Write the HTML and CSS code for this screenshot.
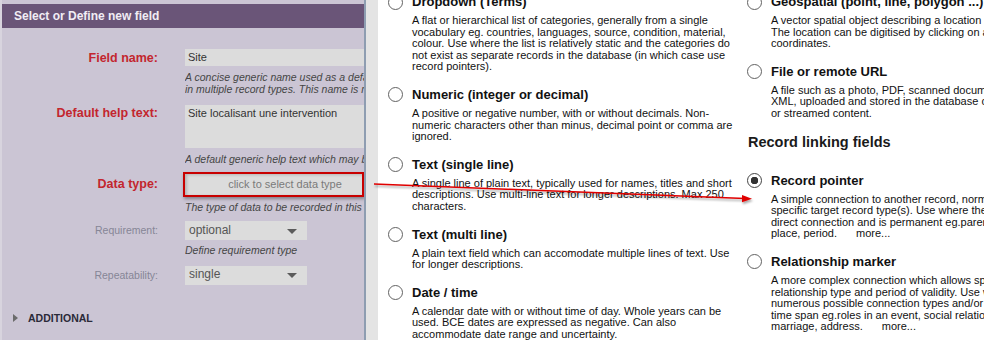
FILE: index.html
```html
<!DOCTYPE html>
<html lang="en">
<head>
  <meta charset="UTF-8">
  <meta name="viewport" content="width=device-width, initial-scale=1.0">
  <title>Select or Define new field</title>
  <link rel="stylesheet" href="styles.css">
</head>
<body>
  <div class="page">
    <div class="field-panel">
      <div class="panel-header">Select or Define new field</div>
      <div class="panel-body">
        <div class="row row-name">
          <div class="label">Field name:</div>
          <div class="control">
            <div class="input">Site</div>
            <div class="help">A concise generic name used as a default<br>in multiple record types. This name is rarely</div>
          </div>
        </div>
        <div class="row row-help">
          <div class="label">Default help text:</div>
          <div class="control">
            <div class="input textarea">Site localisant une intervention</div>
            <div class="help">A default generic help text which may be</div>
          </div>
        </div>
        <div class="row row-type">
          <div class="label label-type">Data type:</div>
          <div class="control">
            <div class="dt-box">
              <div class="dt-btn">click to select data type</div>
            </div>
            <div class="help">The type of data to be recorded in this field</div>
          </div>
        </div>
        <div class="row row-req">
          <div class="label plain">Requirement:</div>
          <div class="control">
            <div class="select"><span>optional</span><span class="caret"></span></div>
            <div class="help help-tight">Define requirement type</div>
          </div>
        </div>
        <div class="row row-rep">
          <div class="label plain">Repeatability:</div>
          <div class="control">
            <div class="select"><span>single</span><span class="caret"></span></div>
          </div>
        </div>
        <div class="additional"><span class="tri"></span>ADDITIONAL</div>
      </div>
    </div>

    <div class="gutter"></div>

    <div class="type-col">
      <div class="opt">
        <span class="radio"></span>
        <div>
          <div class="opt-title">Dropdown (Terms)</div>
          <div class="opt-desc">A flat or hierarchical list of categories, generally from a single vocabulary eg. countries, languages, source, condition, material, colour. Use where the list is relatively static and the categories do not exist as separate records in the database (in which case use record pointers).</div>
        </div>
      </div>
      <div class="opt">
        <span class="radio"></span>
        <div>
          <div class="opt-title">Numeric (integer or decimal)</div>
          <div class="opt-desc">A positive or negative number, with or without decimals. Non-numeric characters other than minus, decimal point or comma are ignored.</div>
        </div>
      </div>
      <div class="opt">
        <span class="radio"></span>
        <div>
          <div class="opt-title">Text (single line)</div>
          <div class="opt-desc">A single line of plain text, typically used for names, titles and short descriptions. Use multi-line text for longer descriptions. Max 250 characters.</div>
        </div>
      </div>
      <div class="opt">
        <span class="radio"></span>
        <div>
          <div class="opt-title">Text (multi line)</div>
          <div class="opt-desc">A plain text field which can accomodate multiple lines of text. Use for longer descriptions.</div>
        </div>
      </div>
      <div class="opt">
        <span class="radio"></span>
        <div>
          <div class="opt-title">Date / time</div>
          <div class="opt-desc">A calendar date with or without time of day. Whole years can be used. BCE dates are expressed as negative. Can also accommodate date range and uncertainty.</div>
        </div>
      </div>
    </div>

    <div class="type-col type-col-right">
      <div class="opt">
        <span class="radio"></span>
        <div>
          <div class="opt-title">Geospatial (point, line, polygon ...)</div>
          <div class="opt-desc nowrap">A vector spatial object describing a location or region.<br>The location can be digitised by clicking on a map, or entered as<br>coordinates.</div>
        </div>
      </div>
      <div class="opt">
        <span class="radio"></span>
        <div>
          <div class="opt-title">File or remote URL</div>
          <div class="opt-desc nowrap">A file such as a photo, PDF, scanned document, text file or<br>XML, uploaded and stored in the database or a URL to remote files<br>or streamed content.</div>
        </div>
      </div>
      <div class="group-title">Record linking fields</div>
      <div class="opt">
        <span class="radio checked"></span>
        <div>
          <div class="opt-title">Record pointer</div>
          <div class="opt-desc nowrap">A simple connection to another record, normally of one or more<br>specific target record type(s). Use where the linked entity is a<br>direct connection and is permanent eg.parent organisation, birth<br>place, period.<span class="more">more...</span></div>
        </div>
      </div>
      <div class="opt">
        <span class="radio"></span>
        <div>
          <div class="opt-title">Relationship marker</div>
          <div class="opt-desc nowrap">A more complex connection which allows specification of the<br>relationship type and period of validity. Use where there are<br>numerous possible connection types and/or a limited<br>time span eg.roles in an event, social relationships,<br>marriage, address.<span class="more">more...</span></div>
        </div>
      </div>
    </div>

    <!-- annotation arrow from the data type button to the chosen type -->
    <svg class="arrow" width="984" height="340" viewBox="0 0 984 340">
      <defs>
        <filter id="shadow" x="-5%" y="-50%" width="110%" height="200%">
          <feDropShadow dx="1" dy="2" stdDeviation="1" flood-color="#000" flood-opacity="0.35"/>
        </filter>
      </defs>
      <g filter="url(#shadow)">
        <line x1="374" y1="184" x2="745" y2="198.4" stroke="#e00000" stroke-width="1.5"/>
        <polygon points="742,195 752,198.7 742,202.2" fill="#e00000"/>
      </g>
    </svg>
  </div>
</body>
</html>
```

FILE: styles.css
```css
* {
  box-sizing: border-box;
}

body {
  margin: 0;
  font-family: "Liberation Sans", Arial, sans-serif;
  color: #111;
  background: #fff;
  overflow: hidden;
}

.page {
  position: relative;
  display: flex;
  width: 984px;
  height: 340px;
  overflow: hidden;
}

/* left edit panel */
.field-panel {
  flex: 0 0 366px;
  background: #cbc5d4;
  border-left: 2px solid #d8d4de;
  border-right: 2px solid #8e9db1;
  padding-top: 4px;
  overflow: hidden;
}

.panel-header {
  height: 24px;
  line-height: 24px;
  padding-left: 12px;
  background: #6a5578;
  color: #f1edf4;
  font-size: 12px;
  font-weight: bold;
}

.panel-body {
  padding-top: 21px;
}

.row {
  display: grid;
  grid-template-columns: 156px 1fr;
  column-gap: 27px;
}

.row-name { margin-bottom: 10px; }
.row-help { margin-bottom: 6px; }
.row-type { margin-bottom: 8px; }
.row-req { margin-bottom: 9px; }

.label {
  text-align: right;
  font-size: 12.5px;
  font-weight: bold;
  line-height: 17px;
  color: #c3262e;
  white-space: nowrap;
}

.row-name .label { padding-top: 1px; }
.label-type { line-height: 25px; }

.label.plain {
  font-size: 10.5px;
  font-weight: normal;
  line-height: 19px;
  color: #868696;
}

.control {
  min-width: 0;
  overflow: hidden;
}

.input {
  width: 240px;
  height: 17px;
  line-height: 17px;
  padding: 0 3px;
  background: #dcdcdc;
  font-size: 11px;
  color: #333;
}

.input.textarea {
  height: 43px;
  line-height: 16px;
}

.help {
  margin-top: 6px;
  font-size: 10.5px;
  font-style: italic;
  line-height: 11.5px;
  color: #454545;
  white-space: nowrap;
}

.help-tight { margin-top: 5px; }

/* red outline around the data type button */
.row-type .control {
  margin-left: -2px;
  overflow: visible;
}

.row-type .help {
  margin-top: 5px;
  padding-left: 2px;
}

.dt-box {
  width: 181px;
  height: 25px;
  border: 2px solid #c80000;
  overflow: hidden;
  box-shadow: 1px 2px 3px rgba(0, 0, 0, 0.35);
}

.dt-btn {
  width: 200px;
  height: 21px;
  line-height: 21px;
  text-align: center;
  background: #dcdcdc;
  box-shadow: inset 2px 1px 3px rgba(0, 0, 0, 0.18);
  font-size: 11px;
  color: #7a7a7a;
}

.select {
  display: flex;
  justify-content: space-between;
  align-items: center;
  width: 122px;
  height: 19px;
  padding: 0 10px 2px 4px;
  background: #dcdcdc;
  font-size: 12px;
  color: #555;
}

.caret {
  width: 0;
  height: 0;
  margin-top: 3px;
  border-left: 5px solid transparent;
  border-right: 5px solid transparent;
  border-top: 5px solid #5b5b5b;
}

.additional {
  display: flex;
  align-items: center;
  gap: 10px;
  margin-top: 28px;
  padding-left: 11px;
  font-size: 10.5px;
  font-weight: bold;
  line-height: 11.5px;
  color: #2a2a38;
}

.tri {
  width: 0;
  height: 0;
  border-top: 4.5px solid transparent;
  border-bottom: 4.5px solid transparent;
  border-left: 5px solid #6b6b6b;
}

.gutter {
  flex: 0 0 12px;
  background: #e4e4e4;
}

/* data type choices */
.type-col {
  flex: 0 0 359px;
  margin-top: -6px;
  padding-left: 10px;
}

.type-col-right {
  flex: 1 0 auto;
}

.opt {
  display: grid;
  grid-template-columns: 24px 1fr;
  margin-bottom: 14px;
}

.radio {
  width: 15px;
  height: 15px;
  margin-top: 0.5px;
  border: 1.3px solid #626262;
  border-radius: 50%;
  background: #fff;
}

.radio.checked {
  border-color: #444;
  background: radial-gradient(circle, #333 0 3.5px, #fff 4px);
}

.opt-title {
  font-size: 13px;
  font-weight: bold;
  line-height: 16px;
  color: #111;
  white-space: nowrap;
}

.opt-desc {
  width: 322px;
  margin-top: 5px;
  font-size: 11px;
  line-height: 11.6px;
  color: #111;
}

.opt-desc.nowrap {
  width: auto;
  white-space: nowrap;
}

.more {
  margin-left: 19px;
}

.group-title {
  margin: 0 0 23px 1px;
  font-size: 14.5px;
  font-weight: bold;
  line-height: 16px;
  color: #1a1a1a;
}

.arrow {
  position: absolute;
  top: 0;
  left: 0;
  pointer-events: none;
}
```
